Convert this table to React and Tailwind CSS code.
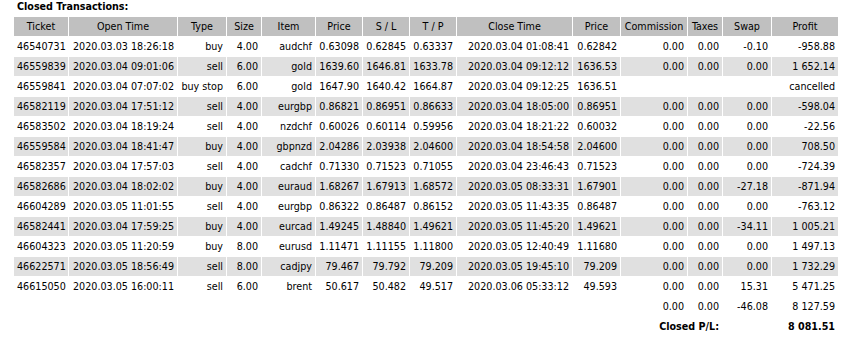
import React from "react";

const rows = [
  ["46540731", "2020.03.03 18:26:18", "buy", "4.00", "audchf", "0.63098", "0.62845", "0.63337", "2020.03.04 01:08:41", "0.62842", "0.00", "0.00", "-0.10", "-958.88"],
  ["46559839", "2020.03.04 09:01:06", "sell", "6.00", "gold", "1639.60", "1646.81", "1633.78", "2020.03.04 09:12:12", "1636.53", "0.00", "0.00", "0.00", "1 652.14"],
  ["46559841", "2020.03.04 07:07:02", "buy stop", "6.00", "gold", "1647.90", "1640.42", "1664.87", "2020.03.04 09:12:25", "1636.51", "", "", "", "cancelled"],
  ["46582119", "2020.03.04 17:51:12", "sell", "4.00", "eurgbp", "0.86821", "0.86951", "0.86633", "2020.03.04 18:05:00", "0.86951", "0.00", "0.00", "0.00", "-598.04"],
  ["46583502", "2020.03.04 18:19:24", "sell", "4.00", "nzdchf", "0.60026", "0.60114", "0.59956", "2020.03.04 18:21:22", "0.60032", "0.00", "0.00", "0.00", "-22.56"],
  ["46559584", "2020.03.04 18:41:47", "buy", "4.00", "gbpnzd", "2.04286", "2.03938", "2.04600", "2020.03.04 18:54:58", "2.04600", "0.00", "0.00", "0.00", "708.50"],
  ["46582357", "2020.03.04 17:57:03", "sell", "4.00", "cadchf", "0.71330", "0.71523", "0.71055", "2020.03.04 23:46:43", "0.71523", "0.00", "0.00", "0.00", "-724.39"],
  ["46582686", "2020.03.04 18:02:02", "buy", "4.00", "euraud", "1.68267", "1.67913", "1.68572", "2020.03.05 08:33:31", "1.67901", "0.00", "0.00", "-27.18", "-871.94"],
  ["46604289", "2020.03.05 11:01:55", "sell", "4.00", "eurgbp", "0.86322", "0.86487", "0.86152", "2020.03.05 11:43:35", "0.86487", "0.00", "0.00", "0.00", "-763.12"],
  ["46582441", "2020.03.04 17:59:25", "buy", "4.00", "eurcad", "1.49245", "1.48840", "1.49621", "2020.03.05 11:45:20", "1.49621", "0.00", "0.00", "-34.11", "1 005.21"],
  ["46604323", "2020.03.05 11:20:59", "buy", "8.00", "eurusd", "1.11471", "1.11155", "1.11800", "2020.03.05 12:40:49", "1.11680", "0.00", "0.00", "0.00", "1 497.13"],
  ["46622571", "2020.03.05 18:56:49", "sell", "8.00", "cadjpy", "79.467", "79.792", "79.209", "2020.03.05 19:45:10", "79.209", "0.00", "0.00", "0.00", "1 732.29"],
  ["46615050", "2020.03.05 16:00:11", "sell", "6.00", "brent", "50.617", "50.482", "49.517", "2020.03.06 05:33:12", "49.593", "0.00", "0.00", "15.31", "5 471.25"],
];

const headers = ["Ticket", "Open Time", "Type", "Size", "Item", "Price", "S / L", "T / P", "Close Time", "Price", "Commission", "Taxes", "Swap", "Profit"];

const font = { fontFamily: '"DejaVu Sans Condensed", "Liberation Sans", sans-serif' };

export default function App() {
  return (
    <div className="w-[848px] h-[340px] bg-white text-black overflow-hidden font-['DejaVu_Sans_Condensed','Liberation_Sans',sans-serif] text-[10.67px]">
      <div className="h-[17px] pl-[17px] leading-[13px] font-bold">Closed Transactions:</div>
      <div className="ml-[14px] grid grid-cols-[54px_108px_48px_34px_53px_46px_46px_46px_115px_47px_66px_34px_48px_66px] auto-rows-[19px] gap-px w-[824px]">
        {headers.map((h, i) => (
          <div key={"h" + i} className="bg-[#c0c0c0] px-[3px] leading-[19px] text-center whitespace-nowrap">{h}</div>
        ))}
        {rows.map((r, ri) =>
          r.map((c, ci) => (
            <div
              key={ri + "-" + ci}
              className={(ri % 2 === 1 ? "bg-[#e0e0e0] " : "") + "px-[3px] leading-[19px] text-right whitespace-nowrap"}
            >
              {c}
            </div>
          ))
        )}
        <div className="col-span-10"></div>
        <div className="px-[3px] leading-[19px] text-right">0.00</div>
        <div className="px-[3px] leading-[19px] text-right">0.00</div>
        <div className="px-[3px] leading-[19px] text-right">-46.08</div>
        <div className="px-[3px] leading-[19px] text-right">8 127.59</div>
        <div className="col-span-12 px-[3px] leading-[19px] text-right font-bold">Closed P/L:</div>
        <div className="col-span-2 px-[3px] leading-[19px] text-right font-bold">8 081.51</div>
      </div>
    </div>
  );
}
